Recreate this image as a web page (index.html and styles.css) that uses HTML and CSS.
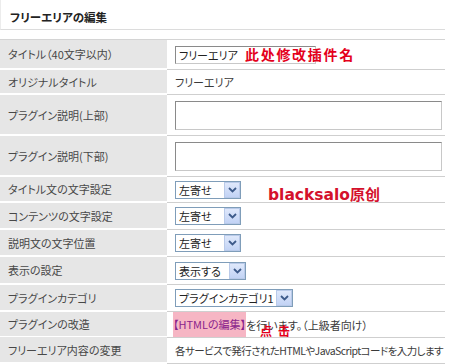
FILE: index.html
```html
<!DOCTYPE html>
<html lang="ja">
<head>
<meta charset="utf-8">
<link rel="stylesheet" href="styles.css">
</head>
<body>
<div class="page">
  <div class="head"><span class="head-title">フリーエリアの編集</span></div>
  <div class="form">
    <div class="row r1">
      <div class="label">タイトル（40文字以内）</div>
      <div class="field"><div class="textbox">フリーエリア</div></div>
    </div>
    <div class="row r2">
      <div class="label">オリジナルタイトル</div>
      <div class="field">フリーエリア</div>
    </div>
    <div class="row r3">
      <div class="label">プラグイン説明(上部)</div>
      <div class="field"><div class="textarea"></div></div>
    </div>
    <div class="row r3">
      <div class="label">プラグイン説明(下部)</div>
      <div class="field"><div class="textarea"></div></div>
    </div>
    <div class="row r5">
      <div class="label">タイトル文の文字設定</div>
      <div class="field"><div class="select w66"><span class="sel-text">左寄せ</span><span class="sel-btn"><svg width="9" height="6" viewBox="0 0 9 6"><path d="M1 1 L4.5 4.5 L8 1" fill="none" stroke="#3d5a8a" stroke-width="1.8"/></svg></span></div></div>
    </div>
    <div class="row r6">
      <div class="label">コンテンツの文字設定</div>
      <div class="field"><div class="select w66"><span class="sel-text">左寄せ</span><span class="sel-btn"><svg width="9" height="6" viewBox="0 0 9 6"><path d="M1 1 L4.5 4.5 L8 1" fill="none" stroke="#3d5a8a" stroke-width="1.8"/></svg></span></div></div>
    </div>
    <div class="row r6">
      <div class="label">説明文の文字位置</div>
      <div class="field"><div class="select w66"><span class="sel-text">左寄せ</span><span class="sel-btn"><svg width="9" height="6" viewBox="0 0 9 6"><path d="M1 1 L4.5 4.5 L8 1" fill="none" stroke="#3d5a8a" stroke-width="1.8"/></svg></span></div></div>
    </div>
    <div class="row r8">
      <div class="label">表示の設定</div>
      <div class="field"><div class="select w71"><span class="sel-text">表示する</span><span class="sel-btn"><svg width="9" height="6" viewBox="0 0 9 6"><path d="M1 1 L4.5 4.5 L8 1" fill="none" stroke="#3d5a8a" stroke-width="1.8"/></svg></span></div></div>
    </div>
    <div class="row r6">
      <div class="label">プラグインカテゴリ</div>
      <div class="field"><div class="select w118"><span class="sel-text">プラグインカテゴリ1</span><span class="sel-btn"><svg width="9" height="6" viewBox="0 0 9 6"><path d="M1 1 L4.5 4.5 L8 1" fill="none" stroke="#3d5a8a" stroke-width="1.8"/></svg></span></div></div>
    </div>
    <div class="row r10">
      <div class="label">プラグインの改造</div>
      <div class="field"><span class="link">【HTMLの編集】</span>を行います。（上級者向け）</div>
    </div>
    <div class="row r11">
      <div class="label">フリーエリア内容の変更</div>
      <div class="field"><span class="tight">各サービスで発行されたHTMLやJavaScriptコードを入力します</span></div>
    </div>
  </div>
  <div class="note note1">此处修改插件名</div>
  <div class="note note2"><span class="latin">blacksalo</span>原创</div>
  <div class="note note3">点击</div>
</div>
</body>
</html>
```

FILE: styles.css
```css
html, body {
  margin: 0;
  padding: 0;
  background: #ffffff;
}
body {
  font-family: "Noto Sans CJK JP", "Noto Sans", sans-serif;
  font-size: 11px;
  color: #3a3a3a;
  font-feature-settings: "palt";
}
.page {
  position: relative;
  width: 450px;
  height: 364px;
  overflow: hidden;
}
.head {
  height: 30px;
  width: 445px;
  box-sizing: border-box;
  border-left: 1px solid #ececec;
  border-bottom: 1px solid #dcdcdc;
  padding-left: 9px;
  display: flex;
  align-items: center;
  padding-top: 5px;
}
.head-title {
  font-weight: bold;
  font-size: 11.5px;
  color: #222;
}
.form {
  margin-top: 9px;
  width: 445px;
  border-top: 1px solid #d4d4d4;
}
.row {
  display: grid;
  grid-template-columns: 167px 1fr;
  box-sizing: border-box;
}
.label {
  background: #e6e6e6;
  padding-left: 8px;
  display: flex;
  align-items: center;
  border-bottom: 2px solid #ffffff;
  color: #484848;
}
.field {
  padding-left: 8px;
  display: flex;
  align-items: center;
  white-space: nowrap;
  border-bottom: 1px solid #cfcfcf;
  box-shadow: inset 0 -2px 0 #ffffff;
}
.r1 { height: 30px; }
.r2 { height: 25px; }
.r3 { height: 41px; }
.r5 { height: 26px; }
.r6 { height: 27px; }
.r8 { height: 28px; }
.r10 { height: 25px; }
.r11 { height: 27px; }
.textbox {
  width: 141px;
  height: 18px;
  box-sizing: border-box;
  border: 1px solid #8a8a8a;
  border-bottom-color: #c8c8c8;
  border-right-color: #c8c8c8;
  padding-left: 3px;
  display: flex;
  align-items: center;
  color: #222;
}
.textarea {
  width: 267px;
  height: 29px;
  box-sizing: border-box;
  border: 1px solid #8a8a8a;
  border-bottom-color: #c8c8c8;
  border-right-color: #c8c8c8;
}
.select {
  height: 18px;
  box-sizing: border-box;
  border: 1px solid #7f9db9;
  display: flex;
  align-items: center;
  justify-content: space-between;
  background: #fff;
  color: #222;
}
.w66 { width: 66px; }
.w71 { width: 71px; }
.w118 { width: 118px; }
.sel-text {
  padding-left: 3px;
}
.sel-btn {
  width: 16px;
  height: 16px;
  box-sizing: border-box;
  background: linear-gradient(#dfe8fb, #c2d3f5);
  border: 1px solid #b9cae9;
  display: flex;
  align-items: center;
  justify-content: center;
}
.link {
  background: #f6b6c4;
  color: #8a1f8c;
  margin-left: -2px;
  padding: 4px 0 5px;
}
.tight {
  font-size: 10.5px;
  letter-spacing: -0.55px;
}
.note {
  position: absolute;
  color: #e4001b;
  font-weight: bold;
  font-family: "Noto Sans CJK SC", sans-serif;
  font-feature-settings: normal;
}
.note1 {
  left: 245px;
  top: 44px;
  font-size: 14px;
  letter-spacing: 1.7px;
  line-height: 20px;
}
.note2 {
  left: 268px;
  top: 184px;
  font-size: 15px;
  line-height: 20px;
  color: #d4112c;
}
.note2 .latin {
  font-family: "DejaVu Sans", sans-serif;
  font-size: 15.5px;
}
.note3 {
  left: 260px;
  top: 323px;
  font-size: 12px;
  letter-spacing: 6px;
  line-height: 16px;
}
```
